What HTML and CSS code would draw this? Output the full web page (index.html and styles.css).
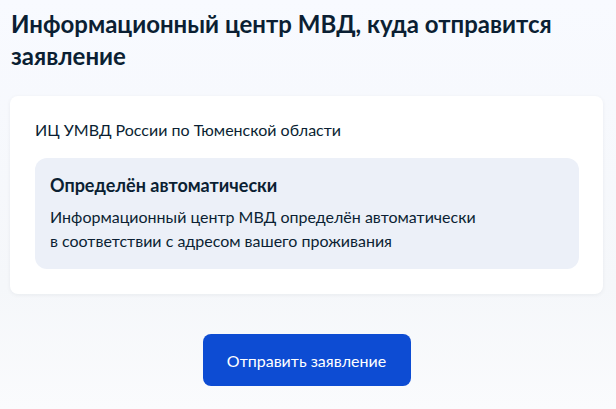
FILE: index.html
```html
<!DOCTYPE html>
<html lang="ru">
  <head>
    <meta charset="UTF-8" />
    <meta name="viewport" content="width=device-width, initial-scale=1.0" />
    <title>Заявление</title>
    <link rel="stylesheet" href="styles.css">
  </head>
  <body>
    <main class="side">
      <h1 class="overskrift">Информационный центр МВД, куда отправится заявление</h1>

      <section class="kort">
        <p class="center-navn">ИЦ УМВД России по Тюменской области</p>
        <div class="info">
          <h2>Определён автоматически</h2>
          <p>Информационный центр МВД определён автоматически<br>в соответствии с адресом вашего проживания</p>
        </div>
      </section>

      <div class="knapper">
        <button class="send">Отправить заявление</button>
      </div>
    </main>
  </body>
</html>
```

FILE: styles.css
```css
* {
  box-sizing: border-box;
}
body {
  margin: 0;
  font-family: Lato, "Noto Sans", sans-serif;
  color: #0b1f33;
  background: linear-gradient(#f8faff, #f5f7fa 70%, #fafbfd);
  min-height: 100vh;
}
.side {
  padding: 8px 13px 0 10px;
}
.overskrift {
  margin: 0 0 24px 1px;
  font-size: 24px;
  line-height: 32px;
  font-weight: 700;
}
.kort {
  background-color: white;
  border-radius: 8px;
  padding: 22px 24px 25px 25px;
  box-shadow: 0 1px 4px rgba(11, 31, 51, 0.06);
}
.center-navn {
  margin: 0 0 16px;
  font-size: 16px;
  line-height: 24px;
}
.info {
  background-color: #ecf0f8;
  border-radius: 12px;
  padding: 15px 16px 16px 15px;
}
.info h2 {
  margin: 0 0 8px;
  font-size: 18px;
  line-height: 24px;
  font-weight: 700;
}
.info p {
  margin: 0;
  font-size: 16px;
  line-height: 24px;
}
.knapper {
  display: flex;
  justify-content: center;
  padding-top: 40px;
}
.send {
  width: 208px;
  height: 52px;
  border: none;
  border-radius: 8px;
  background-color: #0d4cd3;
  color: white;
  font-family: inherit;
  font-size: 16px;
  cursor: pointer;
}
```
